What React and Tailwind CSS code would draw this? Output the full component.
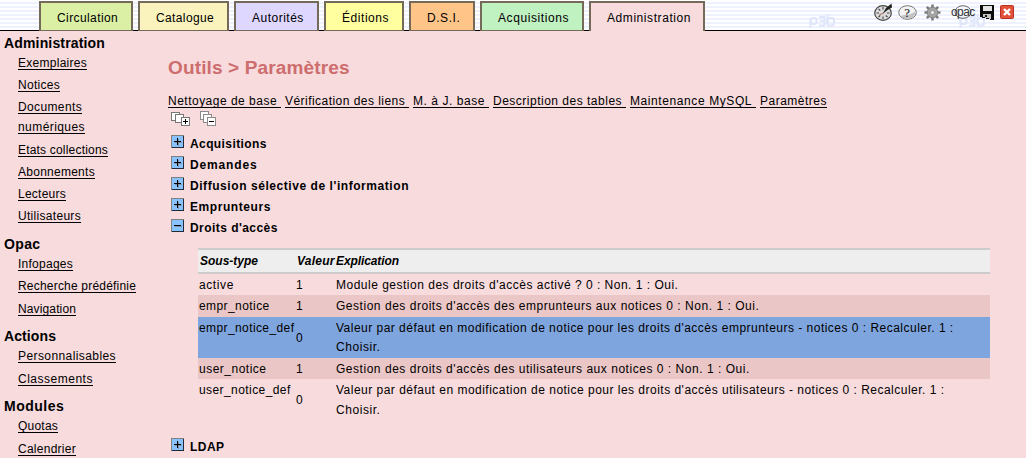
const tabs = [
  ['Circulation', 'w-[94px] ml-[39px] bg-[#dcf0a5] tracking-[0.4px]'],
  ['Catalogue', 'w-[91px] ml-[5px] bg-[#faf3bd] tracking-[0.38px]'],
  ['Autorités', 'w-[85px] ml-[5px] bg-[#ded7ff] tracking-[0.5px]'],
  ['Éditions', 'w-[80px] ml-[5px] bg-[#ffffa0] tracking-[0.55px]'],
  ['D.S.I.', 'w-[66px] ml-[5px] bg-[#ffc488] tracking-[0.55px]'],
  ['Acquisitions', 'w-[104px] ml-[5px] bg-[#c0f1c1] tracking-[0.58px]'],
];

const menu = [
  {
    title: 'Administration', cls: 'tracking-[0.16px]',
    items: [
      [['Exemplaires', 'mt-[6px] tracking-[0.27px]']],
      [['Notices', 'mt-[9px] tracking-[0.29px]']],
      [['Documents', 'mt-[9px] tracking-[0.37px]'], ['numériques', 'mt-[7px] tracking-[0.43px]']],
      [['Etats collections', 'mt-[10px] tracking-[0.19px]']],
      [['Abonnements', 'mt-[9px] tracking-[0.26px]']],
      [['Lecteurs', 'mt-[9px] tracking-[0.25px]']],
      [['Utilisateurs', 'mt-[9px] tracking-[0.3px]']],
    ],
  },
  {
    title: 'Opac', cls: 'mt-[13px] tracking-[0.35px]',
    items: [
      [['Infopages', 'mt-[6px] tracking-[0.26px]']],
      [['Recherche prédéfinie', 'mt-[9px] tracking-[0.2px]']],
      [['Navigation', 'mt-[10px] tracking-[0.13px]']],
    ],
  },
  {
    title: 'Actions', cls: 'mt-[12px] tracking-[0.1px]',
    items: [
      [['Personnalisables', 'mt-[6px] tracking-[0.41px]']],
      [['Classements', 'mt-[10px] tracking-[0.51px]']],
    ],
  },
  {
    title: 'Modules', cls: 'mt-[12px] tracking-[0.5px]',
    items: [
      [['Quotas', 'mt-[6px] tracking-[0.22px]']],
      [['Calendrier', 'mt-[10px] tracking-[0.26px]']],
    ],
  },
];

const links = [
  ['Nettoyage de base\u00a0', 'w-[113px] tracking-[0.49px]'],
  ['Vérification des liens\u00a0', 'w-[124px] tracking-[0.46px]'],
  ['M. à J. base\u00a0', 'w-[76px] tracking-[0.56px]'],
  ['Description des tables\u00a0', 'w-[133px] tracking-[0.5px]'],
  ['Maintenance MySQL\u00a0', 'w-[126px] tracking-[0.59px]'],
  ['Paramètres', 'w-[67px] tracking-[0.5px]'],
];

const sections = [
  ['Acquisitions', 'tracking-[0.4px]'],
  ['Demandes', 'tracking-[0.85px]'],
  ["Diffusion sélective de l'information", 'tracking-[0.56px]'],
  ['Emprunteurs', 'tracking-[0.57px]'],
];

const rows = [
  { cls: 'h-[21px]', name: 'active', nameCls: 'tracking-[0.6px]', value: '1', valueCls: '', text: "Module gestion des droits d'accès activé ? 0 : Non. 1 : Oui.", textCls: 'tracking-[0.5px]' },
  { cls: 'h-[22px] bg-[#ebc6c6]', name: 'empr_notice', nameCls: 'tracking-[0.42px]', value: '1', valueCls: '', text: "Gestion des droits d'accès des emprunteurs aux notices 0 : Non. 1 : Oui.", textCls: 'tracking-[0.53px]' },
  { cls: 'h-[41px] bg-[#7fa5de]', name: 'empr_notice_def', nameCls: 'tracking-[0.4px]', value: '0', valueCls: 'pt-[10px]', text: "Valeur par défaut en modification de notice pour les droits d'accès emprunteurs - notices 0 : Recalculer. 1 :", textCls: 'tracking-[0.483px]', more: 'Choisir.', moreCls: '-mt-px' },
  { cls: 'h-[21px] bg-[#ebc6c6]', name: 'user_notice', nameCls: 'tracking-[0.5px]', value: '1', valueCls: '', text: "Gestion des droits d'accès des utilisateurs aux notices 0 : Non. 1 : Oui.", textCls: 'tracking-[0.53px]' },
  { cls: 'h-[41px]', name: 'user_notice_def', nameCls: 'tracking-[0.42px]', value: '0', valueCls: 'pt-[10px]', text: "Valeur par défaut en modification de notice pour les droits d'accès utilisateurs - notices 0 : Recalculer. 1 :", textCls: 'tracking-[0.486px]', more: 'Choisir.', moreCls: '' },
];

function Toggle({ open }) {
  return (
    <svg width="13" height="13" shapeRendering="crispEdges" className="shrink-0">
      <rect width="13" height="13" fill="#808080" />
      <path d="M12 1h1v12H1v-1h11z" fill="#222b3a" />
      <rect x="1" y="1" width="11" height="11" fill="#88c2ff" />
      <path d={open ? 'M4 7h7v1H4z' : 'M4 7h7v1H4zM7 4h1v7H7z'} fill="#8293a5" />
      <path d={open ? 'M3 6h7v1H3z' : 'M3 6h7v1H3zM6 3h1v7H6z'} fill="#000" />
    </svg>
  );
}

function Section({ label, cls, open }) {
  return (
    <div className="flex h-[21px] items-start pl-[3px]">
      <Toggle open={open} />
      <span className={`ml-[6px] pt-[2px] text-[12px] leading-[14px] font-bold ${cls}`}>{label}</span>
    </div>
  );
}

function StackIcon({ minus }) {
  return minus ? (
    <svg width="16" height="15" shapeRendering="crispEdges" fill="#fff" stroke="#8b8b8b">
      <rect x=".5" y=".5" width="8" height="8" />
      <rect x="3.500" y="3.500" width="8" height="8" />
      <rect x="7.500" y="6.500" width="8" height="8" />
      <path d="M9 10.500h5" stroke="#000" />
    </svg>
  ) : (
    <svg width="19" height="15" shapeRendering="crispEdges" fill="#fff" stroke="#777">
      <rect x=".5" y="1.500" width="8" height="8" />
      <rect x="4.500" y="3.500" width="8" height="8" />
      <rect x="10.500" y="6.500" width="8" height="8" />
      <path d="M12 10.500h5M14.500 8v5" stroke="#000" />
    </svg>
  );
}

function ClockIcon() {
  return (
    <svg width="19" height="18" viewBox="0 0 19 18">
      <ellipse cx="9" cy="10" rx="8.300" ry="7.300" fill="#dcdcdc" stroke="#444" strokeWidth="1.200" />
      <path d="M9 4v2.500M9 13.500V16M2.500 10H5M13 10h2.500M4.500 6l1.800 1.500M4.500 14l1.800-1.500M13.500 14l-1.800-1.500" stroke="#444" strokeWidth="1.100" />
      <path d="M8.500 11 12 5 17.500 .5 18 4.500l-4.500 2.500z" fill="#222" />
      <path d="M5.500 11.500l4-1" stroke="#a66" strokeWidth="1" />
    </svg>
  );
}

function HelpIcon() {
  return (
    <svg width="19" height="15" viewBox="0 0 19 15">
      <ellipse cx="9.500" cy="7.500" rx="8.800" ry="6.800" fill="#f3f3f3" stroke="#777" />
      <path d="M2.500 11C6 9 13 11 17.500 6 18 12 12 14 9.500 14 6 14 3.500 12.500 2.500 11z" fill="#c4c4c4" />
      <text x="6.600" y="12" fontSize="12" fontFamily="Liberation Serif" fill="#222" stroke="#222" strokeWidth=".2">?</text>
    </svg>
  );
}

function GearIcon() {
  return (
    <svg width="17" height="17" viewBox="0 0 17 17">
      <g stroke="#7d7d7d" strokeWidth="2.600">
        <path d="M8.500 .5v16M.5 8.500h16M2.800 2.800l11.400 11.400M14.200 2.800 2.800 14.200" />
      </g>
      <circle cx="8.500" cy="8.500" r="5.300" fill="#a5a5a5" stroke="#808080" />
      <circle cx="8.500" cy="8.500" r="1.900" fill="#f4f6fd" stroke="#777" strokeWidth=".6" />
    </svg>
  );
}

function OpacIcon() {
  return (
    <svg width="24" height="16" viewBox="0 0 24 16" className="overflow-visible">
      <ellipse cx="12" cy="8" rx="8" ry="6.300" fill="#f4f6fd" stroke="#555" strokeWidth=".9" />
      <text x="0" y="11.500" fontSize="12" fontFamily="Liberation Sans" letterSpacing="-0.6" fill="#333">opac</text>
    </svg>
  );
}

function SaveIcon() {
  return (
    <svg width="14" height="15" shapeRendering="crispEdges">
      <path d="M0 0h14v15h-2L0 12z" fill="#0c0c0c" />
      <path d="M3 1h9v5H3z" fill="#e4e4e4" />
      <path d="M3 9h8v5l-8-2z" fill="#c4c4c4" />
      <path d="M5 10h2v2H5z" fill="#111" />
    </svg>
  );
}

function CloseIcon() {
  return (
    <svg width="14" height="14">
      <rect x=".5" y=".5" width="13" height="13" rx="1" fill="#e2503a" stroke="#b92f24" />
      <path d="M4 4l6 6M10 4l-6 6" stroke="#fff" strokeWidth="2.400" />
    </svg>
  );
}

function Watermark({ cls }) {
  return (
    <svg width="27" height="14" className={`absolute top-[14px] ${cls}`} fill="none" stroke="#dfe6fa" strokeWidth="2">
      <rect x="1.500" y="4" width="6" height="6" rx="2" />
      <path d="M1.500 5v9" />
      <path d="M10 3h5.500v8.500H10M11 7.200h4.500" />
      <rect x="18.500" y="4" width="6.500" height="7.500" rx="2" />
      <path d="M18.500 0v10" />
    </svg>
  );
}

export default function App() {
  return (
    <div className="h-[458px] w-[1026px] overflow-hidden bg-[#f7dbdd] font-['Liberation_Sans',sans-serif] text-[12px] text-black">
      <header className="relative flex h-[31px] items-start border-b border-black bg-[repeating-linear-gradient(to_bottom,#ffffff_0px,#ffffff_2px,#eef2fe_2px,#eef2fe_4px)]">
        <Watermark cls="left-[809px]" />
        <Watermark cls="left-[959px]" />
        {tabs.map(([label, cls]) => (
          <div key={label} className={`relative mt-px h-[30px] shrink-0 border-2 border-b border-[#75695a] pt-[8px] pl-[16px] leading-[14px] ${cls}`}>{label}</div>
        ))}
        <div className="relative mt-px ml-[5px] h-[30px] w-[116px] shrink-0 border-2 border-b-0 border-[#75695a] bg-[#f7dbdd] pt-[8px] pl-[16px] leading-[14px] tracking-[0.57px]">Administration</div>
        <div className="relative ml-[169px] flex items-start">
          <div className="mt-[3px]"><ClockIcon /></div>
          <div className="mt-[5px] ml-[5px]"><HelpIcon /></div>
          <div className="mt-[4px] ml-[7px]"><GearIcon /></div>
          <div className="mt-[4px] ml-[10px]"><OpacIcon /></div>
          <div className="mt-[5px] ml-[5px]"><SaveIcon /></div>
          <div className="mt-[5px] ml-[6px]"><CloseIcon /></div>
        </div>
      </header>

      <div className="flex">
        <nav className="flex w-[168px] shrink-0 flex-col pt-[4px]">
          {menu.map((s) => (
            <div key={s.title} className="flex flex-col">
              <h3 className={`pl-[4px] text-[14px] leading-[16px] font-bold ${s.cls}`}>{s.title}</h3>
              {s.items.flat().map(([label, cls]) => (
                <a key={label} className={`ml-[18px] w-fit border-b border-black leading-[12px] whitespace-nowrap ${cls}`}>{label}</a>
              ))}
            </div>
          ))}
        </nav>

        <main className="w-[858px]">
          <h1 className="mt-[26px] text-[19px] leading-[22px] font-bold tracking-[0.14px] text-[#cd6d6d]">Outils &gt; Paramètres</h1>
          <div className="mt-[16px] flex gap-[4px]">
            {links.map(([label, cls]) => (
              <a key={label} className={`border-b border-black leading-[12px] whitespace-nowrap ${cls}`}>{label}</a>
            ))}
          </div>
          <div className="mt-[3px] flex h-[24px] items-start gap-[10px] pl-[3px]">
            <StackIcon />
            <StackIcon minus />
          </div>
          {sections.map(([label, cls]) => <Section key={label} label={label} cls={cls} />)}
          <Section label="Droits d'accès" cls="tracking-[0.45px]" open />

          <div className="mt-[8px] mb-[18px] ml-[30px] w-[792px] leading-[20px]">
            <div className="flex h-[26px] border-y-2 border-[#ccc] bg-[#eee] pt-px font-bold italic">
              <div className="w-[98px] pl-[2px]">Sous-type</div>
              <div className="w-[40px] pl-px tracking-[0.25px]">Valeur</div>
              <div className="tracking-[-0.1px]">Explication</div>
            </div>
            {rows.map((r) => (
              <div key={r.name} className={`flex pt-px whitespace-nowrap ${r.cls}`}>
                <div className={`w-[98px] pl-px ${r.nameCls}`}>{r.name}</div>
                <div className={`w-[40px] ${r.valueCls}`}>{r.value}</div>
                <div>
                  <div className={r.textCls}>{r.text}</div>
                  {r.more && <div className={`tracking-[0.55px] ${r.moreCls}`}>{r.more}</div>}
                </div>
              </div>
            ))}
          </div>
          <Section label="LDAP" cls="tracking-[0.45px]" />
        </main>
      </div>
    </div>
  );
}
